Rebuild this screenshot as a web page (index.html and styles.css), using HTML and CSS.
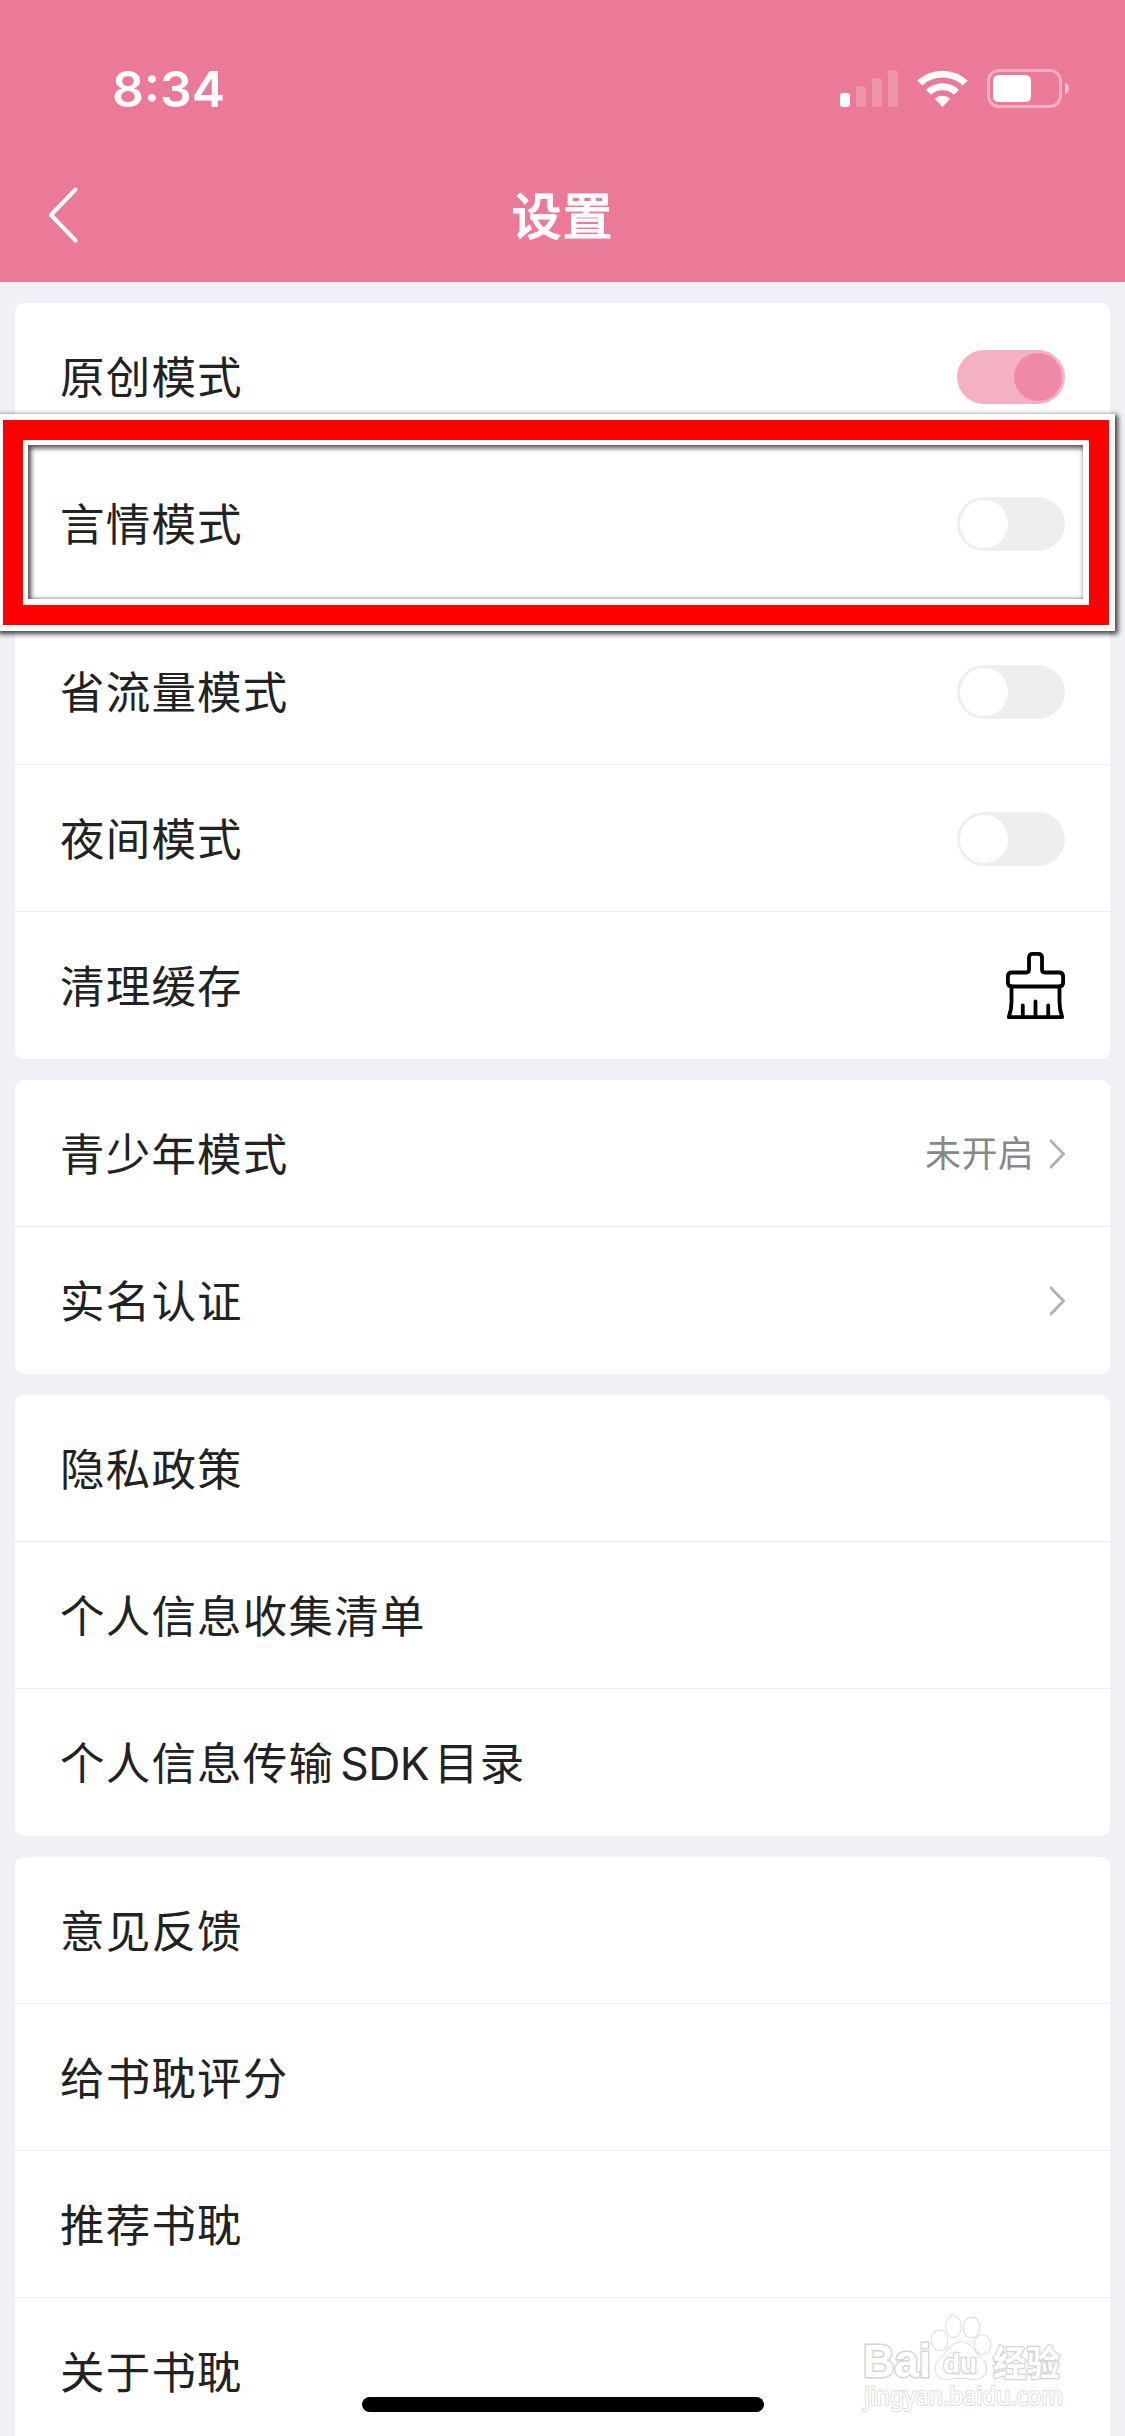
FILE: index.html
```html
<!DOCTYPE html>
<html lang="zh-CN">
<head>
<meta charset="utf-8">
<title>设置</title>
<link rel="stylesheet" href="styles.css">
</head>
<body>
<div class="screen">
  <header class="header">
    <div class="status">
      <span class="time">8:34</span>
      <svg class="status-icons" width="232" height="42" viewBox="0 0 232 42" fill="#fff">
        <rect x="0" y="25" width="10" height="14" rx="3"/>
        <g opacity=".2">
          <rect x="16" y="18" width="10" height="21" rx="3"/>
          <rect x="32" y="10" width="10" height="29" rx="3"/>
          <rect x="48" y="2" width="10" height="37" rx="3"/>
        </g>
        <path d="M77.3 12.6 A37 37 0 0 1 127.700 12.600 L122.900 17.500 A30 30 0 0 0 82.100 17.500 Z"/>
        <path d="M86 21.700 A24.500 24.500 0 0 1 119 21.700 L114 26.700 A17 17 0 0 0 91 26.700 Z"/>
        <path d="M94.800 30.800 A11.500 11.500 0 0 1 110.200 30.800 L102.500 39 Z"/>
        <rect x="148.500" y="2.500" width="72" height="36" rx="10.500" fill="none" stroke="#fff" stroke-width="3" stroke-opacity=".4"/>
        <rect x="153" y="7" width="38" height="27" rx="5.500"/>
        <path d="M225 14.500 Q229 16.500 229 20.500 T225 26.500 Z" opacity=".5"/>
      </svg>
    </div>
    <div class="navbar">
      <svg class="back" width="34" height="58" viewBox="0 0 34 58" fill="none" stroke="#fff" stroke-width="4" stroke-linecap="round" stroke-linejoin="round"><path d="M29.500 3.500 L5 29 L29.500 54.500"/></svg>
      <h1 class="title">设置</h1>
    </div>
  </header>

  <main class="groups">
    <section class="card">
      <div class="row"><span class="label">原创模式</span><span class="toggle on"></span></div>
      <div class="row"><span class="label">言情模式</span><span class="toggle"></span></div>
    </section>
    <section class="card">
      <div class="row"><span class="label">省流量模式</span><span class="toggle"></span></div>
      <div class="row"><span class="label">夜间模式</span><span class="toggle"></span></div>
      <div class="row"><span class="label">清理缓存</span>
        <svg class="brush" width="59" height="67" viewBox="0 0 59 67" fill="none" stroke="#000" stroke-width="3.800" stroke-linecap="round" stroke-linejoin="round">
          <path d="M6 20.500 H20 Q23 20.500 23 17.500 V5.500 Q23 1.900 26.700 1.900 H32.300 Q36 1.900 36 5.500 V17.500 Q36 20.500 39 20.500 H53 Q57.100 20.500 57.100 24.500 V30.500 Q57.100 34.500 53 34.500 H6 Q1.900 34.500 1.900 30.500 V24.500 Q1.900 20.500 6 20.500 Z"/>
          <path d="M5.500 34.500 V50 Q5.500 58 2.800 65.100 H56.200 Q53.500 58 53.500 50 V34.500"/>
          <path d="M16.800 53.500 V65 M29.500 49.500 V65 M42.200 53.500 V65"/>
        </svg>
      </div>
    </section>
    <section class="card">
      <div class="row"><span class="label">青少年模式</span><span class="value">未开启</span>
        <svg class="chevron" width="15" height="30" viewBox="0 0 15 30" fill="none" stroke="#b0b0b0" stroke-width="2.800"><path d="M0 1 L13.500 15 L0 29"/></svg></div>
      <div class="row"><span class="label">实名认证</span>
        <svg class="chevron" width="15" height="30" viewBox="0 0 15 30" fill="none" stroke="#b0b0b0" stroke-width="2.800"><path d="M0 1 L13.500 15 L0 29"/></svg></div>
    </section>
    <section class="card">
      <div class="row"><span class="label">隐私政策</span></div>
      <div class="row"><span class="label">个人信息收集清单</span></div>
      <div class="row"><span class="label">个人信息传输<span class="latin">SDK</span>目录</span></div>
    </section>
    <section class="card last">
      <div class="row"><span class="label">意见反馈</span></div>
      <div class="row"><span class="label">给书耽评分</span></div>
      <div class="row"><span class="label">推荐书耽</span></div>
      <div class="row"><span class="label">关于书耽</span></div>
    </section>
  </main>

  <div class="highlight"><div class="highlight-red"><div class="highlight-inner"></div></div></div>
  <div class="home-indicator"></div>

  <svg class="watermark" width="225" height="120" viewBox="0 0 225 120">
    <g class="outline">
      <text class="wm-bai" x="13" y="67" textLength="68" lengthAdjust="spacingAndGlyphs">Bai</text>
      <ellipse cx="89.500" cy="30.500" rx="8" ry="10"/>
      <ellipse cx="103.500" cy="16.500" rx="7.500" ry="10.500"/>
      <ellipse cx="121.500" cy="17.500" rx="8" ry="10"/>
      <ellipse cx="132.500" cy="34.500" rx="8" ry="9.500"/>
      <path d="M111 32 C121 32 124 42 131 48 C140 56 137 69 125 69 C119 69 117 68 111 68 C105 68 102 69 97 69 C85 69 82 57 90 49 C97 43 101 32 111 32 Z"/>
      <text class="wm-du" x="93" y="63" textLength="34" lengthAdjust="spacingAndGlyphs">du</text>
      <text class="wm-cn" x="143" y="65.500" textLength="67" lengthAdjust="spacingAndGlyphs">经验</text>
      <text class="wm-url" x="14" y="95" textLength="199" lengthAdjust="spacingAndGlyphs">jingyan.baidu.com</text>
    </g>
  </svg>
</div>
</body>
</html>
```
FILE: styles.css
```css
* { box-sizing: border-box; }
body { margin: 0; background: #f1f0f6; }
.screen {
  position: relative;
  width: 1125px;
  height: 2436px;
  overflow: hidden;
  font-family: Inter, "Noto Sans CJK SC", sans-serif;
  color: #222;
}
.header { height: 282px; background: #ea7a98; color: #fff; }
.status {
  display: flex;
  justify-content: space-between;
  height: 150px;
  padding: 68px 53px 0 112px;
}
.time { font-size: 50px; line-height: 42px; font-weight: 600; letter-spacing: 0; }
.navbar {
  display: grid;
  grid-template-columns: 100px 1fr 100px;
  align-items: center;
  height: 130px;
}
.back { margin-left: 46px; }
.title {
  margin: 0;
  padding-top: 3px;
  text-align: center;
  font-size: 50px;
  line-height: 60px;
  font-weight: 500;
  letter-spacing: 1px;
  -webkit-text-stroke: 0.8px #fff;
}
.groups { display: flex; flex-direction: column; gap: 21px; padding: 21px 15px 0; }
.card { background: #fff; border-radius: 9px; overflow: hidden; }
.last { border-radius: 9px 9px 0 0; }
.row {
  display: flex;
  align-items: center;
  height: 147px;
  padding: 1px 45px 0;
  border-bottom: 1px solid #eee;
}
.row:last-child { border-bottom-color: transparent; }
.label { flex: 1; padding-top: 3px; font-size: 44.5px; line-height: 60px; letter-spacing: 1.2px; }
.latin { margin: 0 5px 0 6px; letter-spacing: -0.6px; }
.value { font-size: 36px; line-height: 50px; letter-spacing: 0.3px; color: #888; margin-right: 16px; }
.toggle { width: 108px; height: 54px; padding: 3px; border-radius: 27px; background: #eee; display: flex; }
.toggle::before { content: ""; width: 48px; height: 48px; border-radius: 50%; background: #fff; }
.toggle.on { background: #f4b1c4; justify-content: flex-end; }
.toggle.on::before { background: #ee8aa7; }
.highlight {
  position: absolute;
  left: -3px;
  top: 414px;
  width: 1118px;
  height: 217px;
  border: 6px solid #fff;
  box-shadow: 2px 2px 5px 1px rgba(0, 0, 0, .75);
}
.highlight-red { height: 100%; border: 20px solid #f00; }
.highlight-inner {
  height: 100%;
  border: solid #fff;
  border-width: 5px 6px 6px 5px;
}
.highlight-inner::before {
  content: "";
  display: block;
  height: 100%;
  box-shadow: inset 2px 2px 5px 1px rgba(0, 0, 0, .7);
}
.home-indicator {
  position: absolute;
  left: 362px;
  top: 2397px;
  width: 402px;
  height: 15px;
  border-radius: 8px;
  background: #000;
}
.watermark { position: absolute; left: 850px; top: 2310px; }
.outline { fill: #fff; stroke: #d4d4d4; stroke-width: 1.5px; paint-order: stroke fill; }
.wm-bai { font: 700 46px "Liberation Sans", sans-serif; stroke-width: 3px; }
.wm-du { font: 700 28px "Liberation Sans", sans-serif; stroke-width: 2.5px; }
.wm-cn { font: 700 35px "Noto Sans CJK SC", sans-serif; stroke-width: 2.5px; }
.wm-url { font: 400 25px "Noto Sans", sans-serif; stroke: #dedede; stroke-width: 2.2px; }
```
